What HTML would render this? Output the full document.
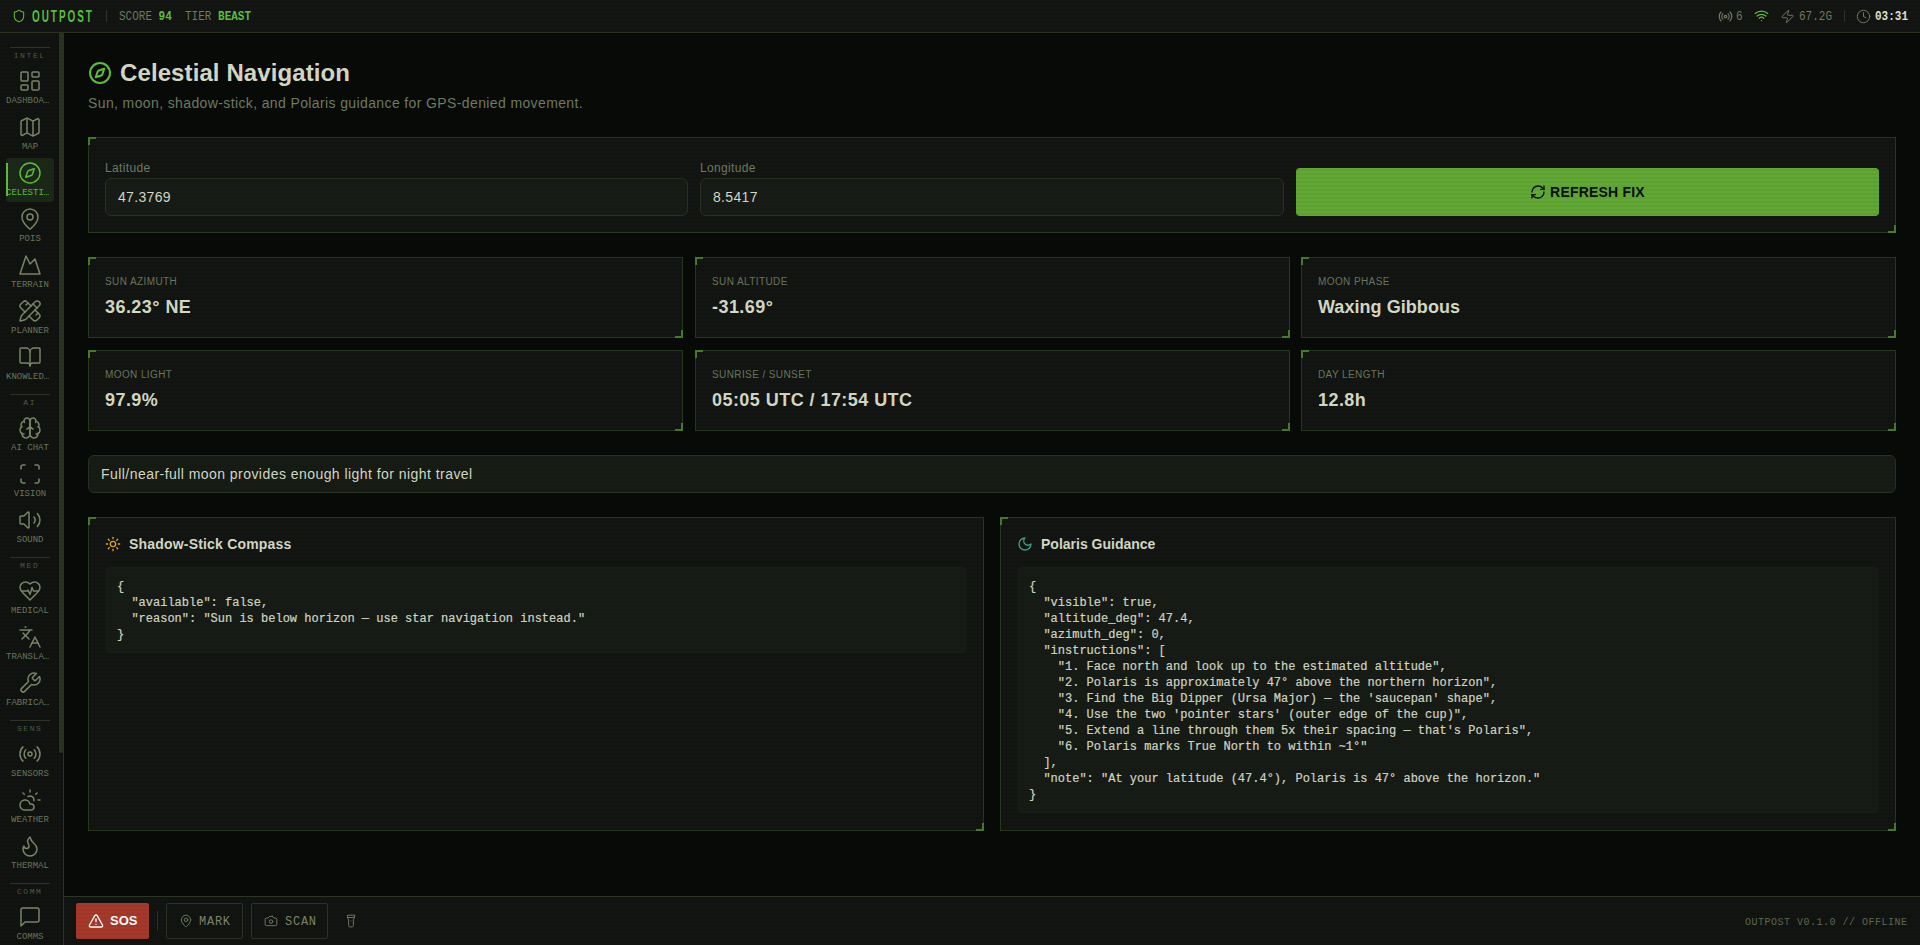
<!DOCTYPE html>
<html><head><meta charset="utf-8">
<style>
*{box-sizing:border-box;margin:0;padding:0}
html,body{width:1920px;height:945px;overflow:hidden;background:#080a07;font-family:"Liberation Sans",sans-serif;color:#d5dac6}
.mono{font-family:"Liberation Mono",monospace}
svg.i{fill:none;stroke:currentColor;stroke-width:2;stroke-linecap:round;stroke-linejoin:round;display:block}
.abs{position:absolute}
/* header */
#hdr{position:absolute;left:0;top:0;width:1920px;height:33px;background:#121511;border-bottom:1px solid #29331f}
/* sidebar */
#side{position:absolute;left:0;top:33px;width:64px;height:912px;background:#10130f;border-right:1px solid #2a3323}
#thumb{position:absolute;left:59px;top:33px;width:4px;height:720px;background:#2b3423;border-radius:0 0 2px 2px}
.sdiv{position:absolute;left:10px;width:40px;height:1px;background:#2c3526}
.slab{position:absolute;left:0;width:59px;text-align:center;font-family:"Liberation Mono",monospace;font-size:8px;letter-spacing:1.6px;color:#505c46;line-height:10px;padding-left:0.4px}
.item{position:absolute;left:6px;width:48px;height:44px;color:#7b8769}
.item svg{position:absolute;left:12px;top:3px;stroke-width:1.5}
.item .lb{position:absolute;left:0;width:48px;top:28px;text-align:center;font-family:"Liberation Mono",monospace;font-size:9px;line-height:12px;letter-spacing:0;color:#6b775c;white-space:nowrap;transform:scaleY(1.1);transform-origin:0 0}
.item.act{background:#1b2817;border-radius:3px;color:#5cbf3a}
.item.act .lb{color:#5cbf3a}
.item.act::before{content:"";position:absolute;left:0;top:5px;width:2px;height:33px;background:#5cbf3a}
/* main */
#main{position:absolute;left:64px;top:33px;width:1856px;height:863px;background:#080a07}
#scan{position:absolute;left:0;top:0;width:1920px;height:945px;pointer-events:none;background:repeating-linear-gradient(180deg,rgba(0,0,0,0) 0px,rgba(0,0,0,0) 2px,rgba(0,0,0,0.04) 2px,rgba(0,0,0,0.04) 4px);background-position:0 -1px}
.panel{position:absolute;background:#121511;border:1px solid #28381f}
.panel::before{content:"";position:absolute;left:-1px;top:-1px;width:6px;height:6px;border-left:2px solid #467d2b;border-top:2px solid #467d2b}
.panel::after{content:"";position:absolute;right:-1px;bottom:-1px;width:6px;height:6px;border-right:2px solid #467d2b;border-bottom:2px solid #467d2b}
.lbl{position:absolute;font-size:12px;color:#6f7c62;line-height:16px;letter-spacing:0.35px}
.inp{position:absolute;height:38px;background:#171b15;border:1px solid #29321f;border-radius:6px;font-size:14px;color:#d5dac6;padding-left:12px;line-height:36px;letter-spacing:0.33px}
.stat .k{position:absolute;left:16px;top:17px;font-size:10px;letter-spacing:0.4px;color:#6b775e;line-height:14px}
.stat .v{position:absolute;left:16px;top:37px;font-size:18px;font-weight:bold;color:#d5dac6;line-height:24px;letter-spacing:0.45px}
pre{font-family:"Liberation Mono",monospace;font-size:12px;line-height:16px;color:#d3d8c3;-webkit-text-stroke:0.2px #d3d8c3}
/* footer */
#ftr{position:absolute;left:64px;top:896px;width:1856px;height:49px;background:#111410;border-top:1px solid #2c3526}
.fbtn{position:absolute;top:6px;height:36px;border:1px solid #2b3423;border-radius:2px;color:#7b8769;font-family:"Liberation Mono",monospace;font-size:12px;letter-spacing:0.75px}
</style></head><body>
<div id="hdr">
 <svg class="i abs" style="left:12px;top:9px;color:#5cc23a;stroke-width:1.8" width="14" height="14" viewBox="0 0 24 24"><path d="M20 13c0 5-3.5 7.5-7.66 8.95a1 1 0 0 1-.67-.01C7.5 20.5 4 18 4 13V6a1 1 0 0 1 1-1c2 0 4.5-1.2 6.24-2.72a1.17 1.17 0 0 1 1.52 0C14.51 3.81 17 5 19 5a1 1 0 0 1 1 1z"/></svg>
 <div class="abs" style="left:32px;top:9px;font-family:'Liberation Sans',sans-serif;font-weight:bold;font-size:16px;line-height:16px;color:#5cc23a;letter-spacing:3.2px;transform:scaleX(0.62);transform-origin:0 0">OUTPOST</div>
 <div class="abs" style="left:106px;top:10px;width:1px;height:12px;background:#2e3828"></div>
 <div class="abs mono" style="left:119px;top:10px;font-size:11px;line-height:12px;transform:scaleY(1.12);transform-origin:0 0;color:#6f7b62;white-space:pre">SCORE <b style="color:#5cc23a">94</b>  TIER <b style="color:#5cc23a">BEAST</b></div>
 <svg class="i abs" style="left:1718px;top:9px;color:#6f7b62" width="15" height="15" viewBox="0 0 24 24"><path d="M4.9 19.1C1 15.2 1 8.8 4.9 4.9"/><path d="M7.8 16.2c-2.3-2.3-2.3-6.1 0-8.5"/><circle cx="12" cy="12" r="2"/><path d="M16.2 7.8c2.3 2.3 2.3 6.1 0 8.5"/><path d="M19.1 4.9C23 8.8 23 15.1 19.1 19"/></svg>
 <div class="abs mono" style="left:1736px;top:10px;font-size:11px;line-height:12px;transform:scaleY(1.12);transform-origin:0 0;color:#6f7b62">6</div>
 <svg class="i abs" style="left:1754px;top:8px;color:#5cc23a" width="15" height="15" viewBox="0 0 24 24"><path d="M12 20h.01"/><path d="M2 8.82a15 15 0 0 1 20 0"/><path d="M5 12.859a10 10 0 0 1 14 0"/><path d="M8.5 16.429a5 5 0 0 1 7 0"/></svg>
 <svg class="i abs" style="left:1780px;top:9px;color:#6f7b62;stroke-width:1.6" width="15" height="15" viewBox="0 0 24 24"><path d="M4 14a1 1 0 0 1-.78-1.63l9.9-10.2a.5.5 0 0 1 .86.46l-1.92 6.02A1 1 0 0 0 13 10h7a1 1 0 0 1 .78 1.63l-9.9 10.2a.5.5 0 0 1-.86-.46l1.92-6.02A1 1 0 0 0 11 14z"/></svg>
 <div class="abs mono" style="left:1799px;top:10px;font-size:11px;line-height:12px;transform:scaleY(1.12);transform-origin:0 0;color:#6f7b62">67.2G</div>
 <div class="abs" style="left:1844px;top:10px;width:1px;height:12px;background:#2e3828"></div>
 <svg class="i abs" style="left:1856px;top:9px;color:#6f7b62;stroke-width:1.6" width="15" height="15" viewBox="0 0 24 24"><circle cx="12" cy="12" r="10"/><polyline points="12 6 12 12 16 14"/></svg>
 <div class="abs mono" style="left:1875px;top:10px;font-size:11px;line-height:12px;transform:scaleY(1.12);transform-origin:0 0;color:#e0e4d4;font-weight:bold">03:31</div>
</div>
<div id="side"></div>
<div id="thumb"></div>
<div id="sideitems">
<div class="sdiv" style="top:47px"></div>
<div class="slab" style="top:51px">INTEL</div>
<div class="item" style="top:66px"><svg class="i" width="24" height="24" viewBox="0 0 24 24"><rect width="7" height="9" x="3" y="3" rx="1"/><rect width="7" height="5" x="14" y="3" rx="1"/><rect width="7" height="9" x="14" y="12" rx="1"/><rect width="7" height="5" x="3" y="16" rx="1"/></svg><div class="lb" style="text-align:left">DASHBOA…</div></div>
<div class="item" style="top:112px"><svg class="i" width="24" height="24" viewBox="0 0 24 24"><path d="M14.106 5.553a2 2 0 0 0 1.788 0l3.659-1.83A1 1 0 0 1 21 4.619v12.764a1 1 0 0 1-.553.894l-4.553 2.277a2 2 0 0 1-1.788 0l-4.212-2.106a2 2 0 0 0-1.788 0l-3.659 1.83A1 1 0 0 1 3 19.381V6.618a1 1 0 0 1 .553-.894l4.553-2.277a2 2 0 0 1 1.788 0z"/><path d="M15 5.764v15"/><path d="M9 3.236v15"/></svg><div class="lb">MAP</div></div>
<div class="item act" style="top:158px"><svg class="i" width="24" height="24" viewBox="0 0 24 24"><circle cx="12" cy="12" r="10"/><path d="m16.24 7.76-1.804 5.411a2 2 0 0 1-1.265 1.265L7.76 16.24l1.804-5.411a2 2 0 0 1 1.265-1.265z"/></svg><div class="lb" style="text-align:left">CELESTI…</div></div>
<div class="item" style="top:204px"><svg class="i" width="24" height="24" viewBox="0 0 24 24"><path d="M20 10c0 4.993-5.539 10.193-7.399 11.799a1 1 0 0 1-1.202 0C9.539 20.193 4 14.993 4 10a8 8 0 0 1 16 0"/><circle cx="12" cy="10" r="3"/></svg><div class="lb">POIS</div></div>
<div class="item" style="top:250px"><svg class="i" width="24" height="24" viewBox="0 0 24 24"><path d="m8 3 4 8 5-5 5 15H2L8 3z"/></svg><div class="lb">TERRAIN</div></div>
<div class="item" style="top:296px"><svg class="i" width="24" height="24" viewBox="0 0 24 24"><path d="M13 7 8.7 2.7a2.41 2.41 0 0 0-3.4 0L2.7 5.3a2.41 2.41 0 0 0 0 3.4L7 13"/><path d="m8 6 2-2"/><path d="m18 16 2-2"/><path d="m17 11 4.3 4.3c.94.94.94 2.46 0 3.4l-2.6 2.6c-.94.94-2.46.94-3.4 0L11 17"/><path d="M21.174 6.812a1 1 0 0 0-3.986-3.987L3.842 16.174a2 2 0 0 0-.5.83l-1.321 4.352a.5.5 0 0 0 .623.622l4.353-1.32a2 2 0 0 0 .83-.497z"/><path d="m15 5 4 4"/></svg><div class="lb">PLANNER</div></div>
<div class="item" style="top:342px"><svg class="i" width="24" height="24" viewBox="0 0 24 24"><path d="M12 7v14"/><path d="M3 18a1 1 0 0 1-1-1V4a1 1 0 0 1 1-1h5a4 4 0 0 1 4 4 4 4 0 0 1 4-4h5a1 1 0 0 1 1 1v13a1 1 0 0 1-1 1h-6a3 3 0 0 0-3 3 3 3 0 0 0-3-3z"/></svg><div class="lb" style="text-align:left">KNOWLED…</div></div>
<div class="sdiv" style="top:394px"></div>
<div class="slab" style="top:398px">AI</div>
<div class="item" style="top:413px"><svg class="i" width="24" height="24" viewBox="0 0 24 24"><path d="M12 5a3 3 0 1 0-5.997.125 4 4 0 0 0-2.526 5.77 4 4 0 0 0 .556 6.588A4 4 0 1 0 12 18Z"/><path d="M12 5a3 3 0 1 1 5.997.125 4 4 0 0 1 2.526 5.77 4 4 0 0 1-.556 6.588A4 4 0 1 1 12 18Z"/><path d="M15 13a4.5 4.5 0 0 1-3-4 4.5 4.5 0 0 1-3 4"/><path d="M17.599 6.5a3 3 0 0 0 .399-1.375"/><path d="M6.003 5.125A3 3 0 0 0 6.401 6.5"/><path d="M3.477 10.896a4 4 0 0 1 .585-.396"/><path d="M19.938 10.5a4 4 0 0 1 .585.396"/><path d="M6 18a4 4 0 0 1-1.967-.516"/><path d="M19.967 17.484A4 4 0 0 1 18 18"/></svg><div class="lb">AI CHAT</div></div>
<div class="item" style="top:459px"><svg class="i" width="24" height="24" viewBox="0 0 24 24"><path d="M3 7V5a2 2 0 0 1 2-2h2"/><path d="M17 3h2a2 2 0 0 1 2 2v2"/><path d="M21 17v2a2 2 0 0 1-2 2h-2"/><path d="M7 21H5a2 2 0 0 1-2-2v-2"/></svg><div class="lb">VISION</div></div>
<div class="item" style="top:505px"><svg class="i" width="24" height="24" viewBox="0 0 24 24"><path d="M11 4.702a.705.705 0 0 0-1.203-.498L6.413 7.587A1.4 1.4 0 0 1 5.416 8H3a1 1 0 0 0-1 1v6a1 1 0 0 0 1 1h2.416a1.4 1.4 0 0 1 .997.413l3.383 3.384A.705.705 0 0 0 11 19.298z"/><path d="M16 9a5 5 0 0 1 0 6"/><path d="M19.364 18.364a9 9 0 0 0 0-12.728"/></svg><div class="lb">SOUND</div></div>
<div class="sdiv" style="top:557px"></div>
<div class="slab" style="top:561px">MED</div>
<div class="item" style="top:576px"><svg class="i" width="24" height="24" viewBox="0 0 24 24"><path d="M19 14c1.49-1.46 3-3.21 3-5.5A5.5 5.5 0 0 0 16.5 3c-1.76 0-3 .5-4.5 2-1.5-1.5-2.74-2-4.5-2A5.5 5.5 0 0 0 2 8.5c0 2.3 1.5 4.05 3 5.5l7 7Z"/><path d="M3.22 12H9.5l.5-1 2 4.5 2-7 1.5 3.5h5.27"/></svg><div class="lb">MEDICAL</div></div>
<div class="item" style="top:622px"><svg class="i" width="24" height="24" viewBox="0 0 24 24"><path d="m5 8 6 6"/><path d="m4 14 6-6 2-3"/><path d="M2 5h12"/><path d="M7 2h1"/><path d="m22 22-5-10-5 10"/><path d="M14 18h6"/></svg><div class="lb" style="text-align:left">TRANSLA…</div></div>
<div class="item" style="top:668px"><svg class="i" width="24" height="24" viewBox="0 0 24 24"><path d="M14.7 6.3a1 1 0 0 0 0 1.4l1.6 1.6a1 1 0 0 0 1.4 0l3.77-3.77a6 6 0 0 1-7.94 7.94l-6.91 6.91a2.12 2.12 0 0 1-3-3l6.91-6.91a6 6 0 0 1 7.94-7.94l-3.76 3.76z"/></svg><div class="lb" style="text-align:left">FABRICA…</div></div>
<div class="sdiv" style="top:720px"></div>
<div class="slab" style="top:724px">SENS</div>
<div class="item" style="top:739px"><svg class="i" width="24" height="24" viewBox="0 0 24 24"><path d="M4.9 19.1C1 15.2 1 8.8 4.9 4.9"/><path d="M7.8 16.2c-2.3-2.3-2.3-6.1 0-8.5"/><circle cx="12" cy="12" r="2"/><path d="M16.2 7.8c2.3 2.3 2.3 6.1 0 8.5"/><path d="M19.1 4.9C23 8.8 23 15.1 19.1 19"/></svg><div class="lb">SENSORS</div></div>
<div class="item" style="top:785px"><svg class="i" width="24" height="24" viewBox="0 0 24 24"><path d="M12 2v2"/><path d="m4.93 4.93 1.41 1.41"/><path d="M20 12h2"/><path d="m19.07 4.93-1.41 1.41"/><path d="M15.947 12.65a4 4 0 0 0-5.925-4.128"/><path d="M13 22H7a5 5 0 1 1 4.9-6H13a3 3 0 0 1 0 6Z"/></svg><div class="lb">WEATHER</div></div>
<div class="item" style="top:831px"><svg class="i" width="24" height="24" viewBox="0 0 24 24"><path d="M8.5 14.5A2.5 2.5 0 0 0 11 12c0-1.38-.5-2-1-3-1.072-2.143-.224-4.054 2-6 .5 2.5 2 4.9 4 6.5 2 1.6 3 3.5 3 5.5a7 7 0 1 1-14 0c0-1.153.433-2.294 1-3a2.5 2.5 0 0 0 2.5 2.5z"/></svg><div class="lb">THERMAL</div></div>
<div class="sdiv" style="top:883px"></div>
<div class="slab" style="top:887px">COMM</div>
<div class="item" style="top:902px"><svg class="i" width="24" height="24" viewBox="0 0 24 24"><path d="M21 15a2 2 0 0 1-2 2H7l-4 4V5a2 2 0 0 1 2-2h14a2 2 0 0 1 2 2z"/></svg><div class="lb">COMMS</div></div>
</div>
<div id="main"></div>
<div id="content">
 <svg class="i abs" style="left:88px;top:61px;color:#5cc23a" width="24" height="24" viewBox="0 0 24 24"><circle cx="12" cy="12" r="10"/><path d="m16.24 7.76-1.804 5.411a2 2 0 0 1-1.265 1.265L7.76 16.24l1.804-5.411a2 2 0 0 1 1.265-1.265z"/></svg>
 <div class="abs" style="left:120px;top:59px;font-size:24px;line-height:28px;font-weight:bold;color:#d5dac6;letter-spacing:0.1px">Celestial Navigation</div>
 <div class="abs" style="left:88px;top:95px;font-size:14px;line-height:16px;color:#6f7c62;letter-spacing:0.38px">Sun, moon, shadow-stick, and Polaris guidance for GPS-denied movement.</div>

 <div class="panel" style="left:88px;top:137px;width:1808px;height:96px">
  <div class="lbl" style="left:16px;top:22px">Latitude</div>
  <div class="inp" style="left:16px;top:40px;width:583px">47.3769</div>
  <div class="lbl" style="left:611px;top:22px">Longitude</div>
  <div class="inp" style="left:611px;top:40px;width:584px">8.5417</div>
  <div class="abs" style="left:1207px;top:30px;width:583px;height:48px;background:#62a835;border-radius:4px;color:#0a0f08;font-weight:bold;font-size:14px;letter-spacing:0.2px;text-align:center;line-height:48px">
   <svg class="i" style="display:inline-block;vertical-align:-3px;margin-right:4px;stroke-width:2" width="16" height="16" viewBox="0 0 24 24"><path d="M3 12a9 9 0 0 1 9-9 9.75 9.75 0 0 1 6.74 2.74L21 8"/><path d="M21 3v5h-5"/><path d="M21 12a9 9 0 0 1-9 9 9.75 9.75 0 0 1-6.74-2.74L3 16"/><path d="M8 16H3v5"/></svg>REFRESH FIX</div>
 </div>

 <div class="panel stat" style="left:88px;top:257px;width:595px;height:81px"><div class="k">SUN AZIMUTH</div><div class="v">36.23° NE</div></div>
 <div class="panel stat" style="left:695px;top:257px;width:595px;height:81px"><div class="k">SUN ALTITUDE</div><div class="v">-31.69°</div></div>
 <div class="panel stat" style="left:1301px;top:257px;width:595px;height:81px"><div class="k">MOON PHASE</div><div class="v" style="letter-spacing:0.05px">Waxing Gibbous</div></div>
 <div class="panel stat" style="left:88px;top:350px;width:595px;height:81px"><div class="k">MOON LIGHT</div><div class="v">97.9%</div></div>
 <div class="panel stat" style="left:695px;top:350px;width:595px;height:81px"><div class="k">SUNRISE / SUNSET</div><div class="v">05:05 UTC / 17:54 UTC</div></div>
 <div class="panel stat" style="left:1301px;top:350px;width:595px;height:81px"><div class="k">DAY LENGTH</div><div class="v">12.8h</div></div>

 <div class="abs" style="left:88px;top:455px;width:1808px;height:38px;background:#161b14;border:1px solid #283222;border-radius:6px;font-size:14px;line-height:36px;padding-left:12px;color:#d5dac6;letter-spacing:0.45px">Full/near-full moon provides enough light for night travel</div>

 <div class="panel" style="left:88px;top:517px;width:896px;height:314px">
  <svg class="i abs" style="left:16px;top:18px;color:#e0a526;stroke-width:2" width="16" height="16" viewBox="0 0 24 24"><circle cx="12" cy="12" r="4"/><path d="M12 2v2"/><path d="M12 20v2"/><path d="m4.93 4.93 1.41 1.41"/><path d="m17.66 17.66 1.41 1.41"/><path d="M2 12h2"/><path d="M20 12h2"/><path d="m6.34 17.66-1.41 1.41"/><path d="m19.07 4.93-1.41 1.41"/></svg>
  <div class="abs" style="left:40px;top:18px;font-size:14px;line-height:16px;font-weight:bold;color:#d5dac6;letter-spacing:0.19px">Shadow-Stick Compass</div>
  <div class="abs" style="left:16px;top:48px;width:862px;height:88px;background:#171b15;border-radius:6px">
<pre class="abs" style="left:12px;top:13px">{
  "available": false,
  "reason": "Sun is below horizon — use star navigation instead."
}</pre></div>
 </div>

 <div class="panel" style="left:1000px;top:517px;width:896px;height:314px">
  <svg class="i abs" style="left:16px;top:18px;color:#40a08a;stroke-width:2" width="16" height="16" viewBox="0 0 24 24"><path d="M12 3a6 6 0 0 0 9 9 9 9 0 1 1-9-9Z"/></svg>
  <div class="abs" style="left:40px;top:18px;font-size:14px;line-height:16px;font-weight:bold;color:#d5dac6;letter-spacing:0px">Polaris Guidance</div>
  <div class="abs" style="left:16px;top:48px;width:862px;height:248px;background:#171b15;border-radius:6px">
<pre class="abs" style="left:12px;top:13px">{
  "visible": true,
  "altitude_deg": 47.4,
  "azimuth_deg": 0,
  "instructions": [
    "1. Face north and look up to the estimated altitude",
    "2. Polaris is approximately 47° above the northern horizon",
    "3. Find the Big Dipper (Ursa Major) — the 'saucepan' shape",
    "4. Use the two 'pointer stars' (outer edge of the cup)",
    "5. Extend a line through them 5x their spacing — that's Polaris",
    "6. Polaris marks True North to within ~1°"
  ],
  "note": "At your latitude (47.4°), Polaris is 47° above the horizon."
}</pre></div>
 </div>
</div>
<div id="ftr">
 <div class="abs" style="left:12px;top:6px;width:73px;height:36px;background:#a5392b;border-radius:2px;color:#fff">
  <svg class="i abs" style="left:12px;top:10px;stroke-width:2" width="16" height="16" viewBox="0 0 24 24"><path d="m21.73 18-8-14a2 2 0 0 0-3.48 0l-8 14A2 2 0 0 0 4 21h16a2 2 0 0 0 1.73-3"/><path d="M12 9v4"/><path d="M12 17h.01"/></svg>
  <div class="abs" style="left:34px;top:10px;font-size:13px;line-height:16px;font-weight:bold;letter-spacing:0px">SOS</div>
 </div>
 <div class="abs" style="left:93px;top:14px;width:1px;height:20px;background:#2b3423"></div>
 <div class="fbtn" style="left:102px;width:77px">
  <svg class="i abs" style="left:12px;top:10px;stroke-width:1.5" width="14" height="14" viewBox="0 0 24 24"><path d="M20 10c0 4.993-5.539 10.193-7.399 11.799a1 1 0 0 1-1.202 0C9.539 20.193 4 14.993 4 10a8 8 0 0 1 16 0"/><circle cx="12" cy="10" r="3"/></svg>
  <div class="abs" style="left:32px;top:10px;line-height:14px;transform:scaleY(1.1);transform-origin:0 0">MARK</div>
 </div>
 <div class="fbtn" style="left:187px;width:77px">
  <svg class="i abs" style="left:12px;top:10px;stroke-width:1.5" width="14" height="14" viewBox="0 0 24 24"><path d="M14.5 4h-5L7 7H4a2 2 0 0 0-2 2v9a2 2 0 0 0 2 2h16a2 2 0 0 0 2-2V9a2 2 0 0 0-2-2h-3l-2.5-3z"/><circle cx="12" cy="13" r="3"/></svg>
  <div class="abs" style="left:33px;top:10px;line-height:14px;transform:scaleY(1.1);transform-origin:0 0">SCAN</div>
 </div>
 <svg class="i abs" style="left:280px;top:17px;color:#7b8769;stroke-width:1.5" width="14" height="14" viewBox="0 0 24 24"><path d="M18 6c0 2-2 2-2 4v10a2 2 0 0 1-2 2h-4a2 2 0 0 1-2-2V10c0-2-2-2-2-4V2h12z"/><line x1="6" x2="18" y1="6" y2="6"/><line x1="12" x2="12" y1="12" y2="12"/></svg>
 <div class="abs mono" style="left:1681px;top:19px;font-size:10px;line-height:12px;letter-spacing:0.5px;color:#5e6b53;transform:scaleY(1.14);transform-origin:0 0">OUTPOST V0.1.0 // OFFLINE</div>
</div>
<div id="scan"></div>
</body></html>
